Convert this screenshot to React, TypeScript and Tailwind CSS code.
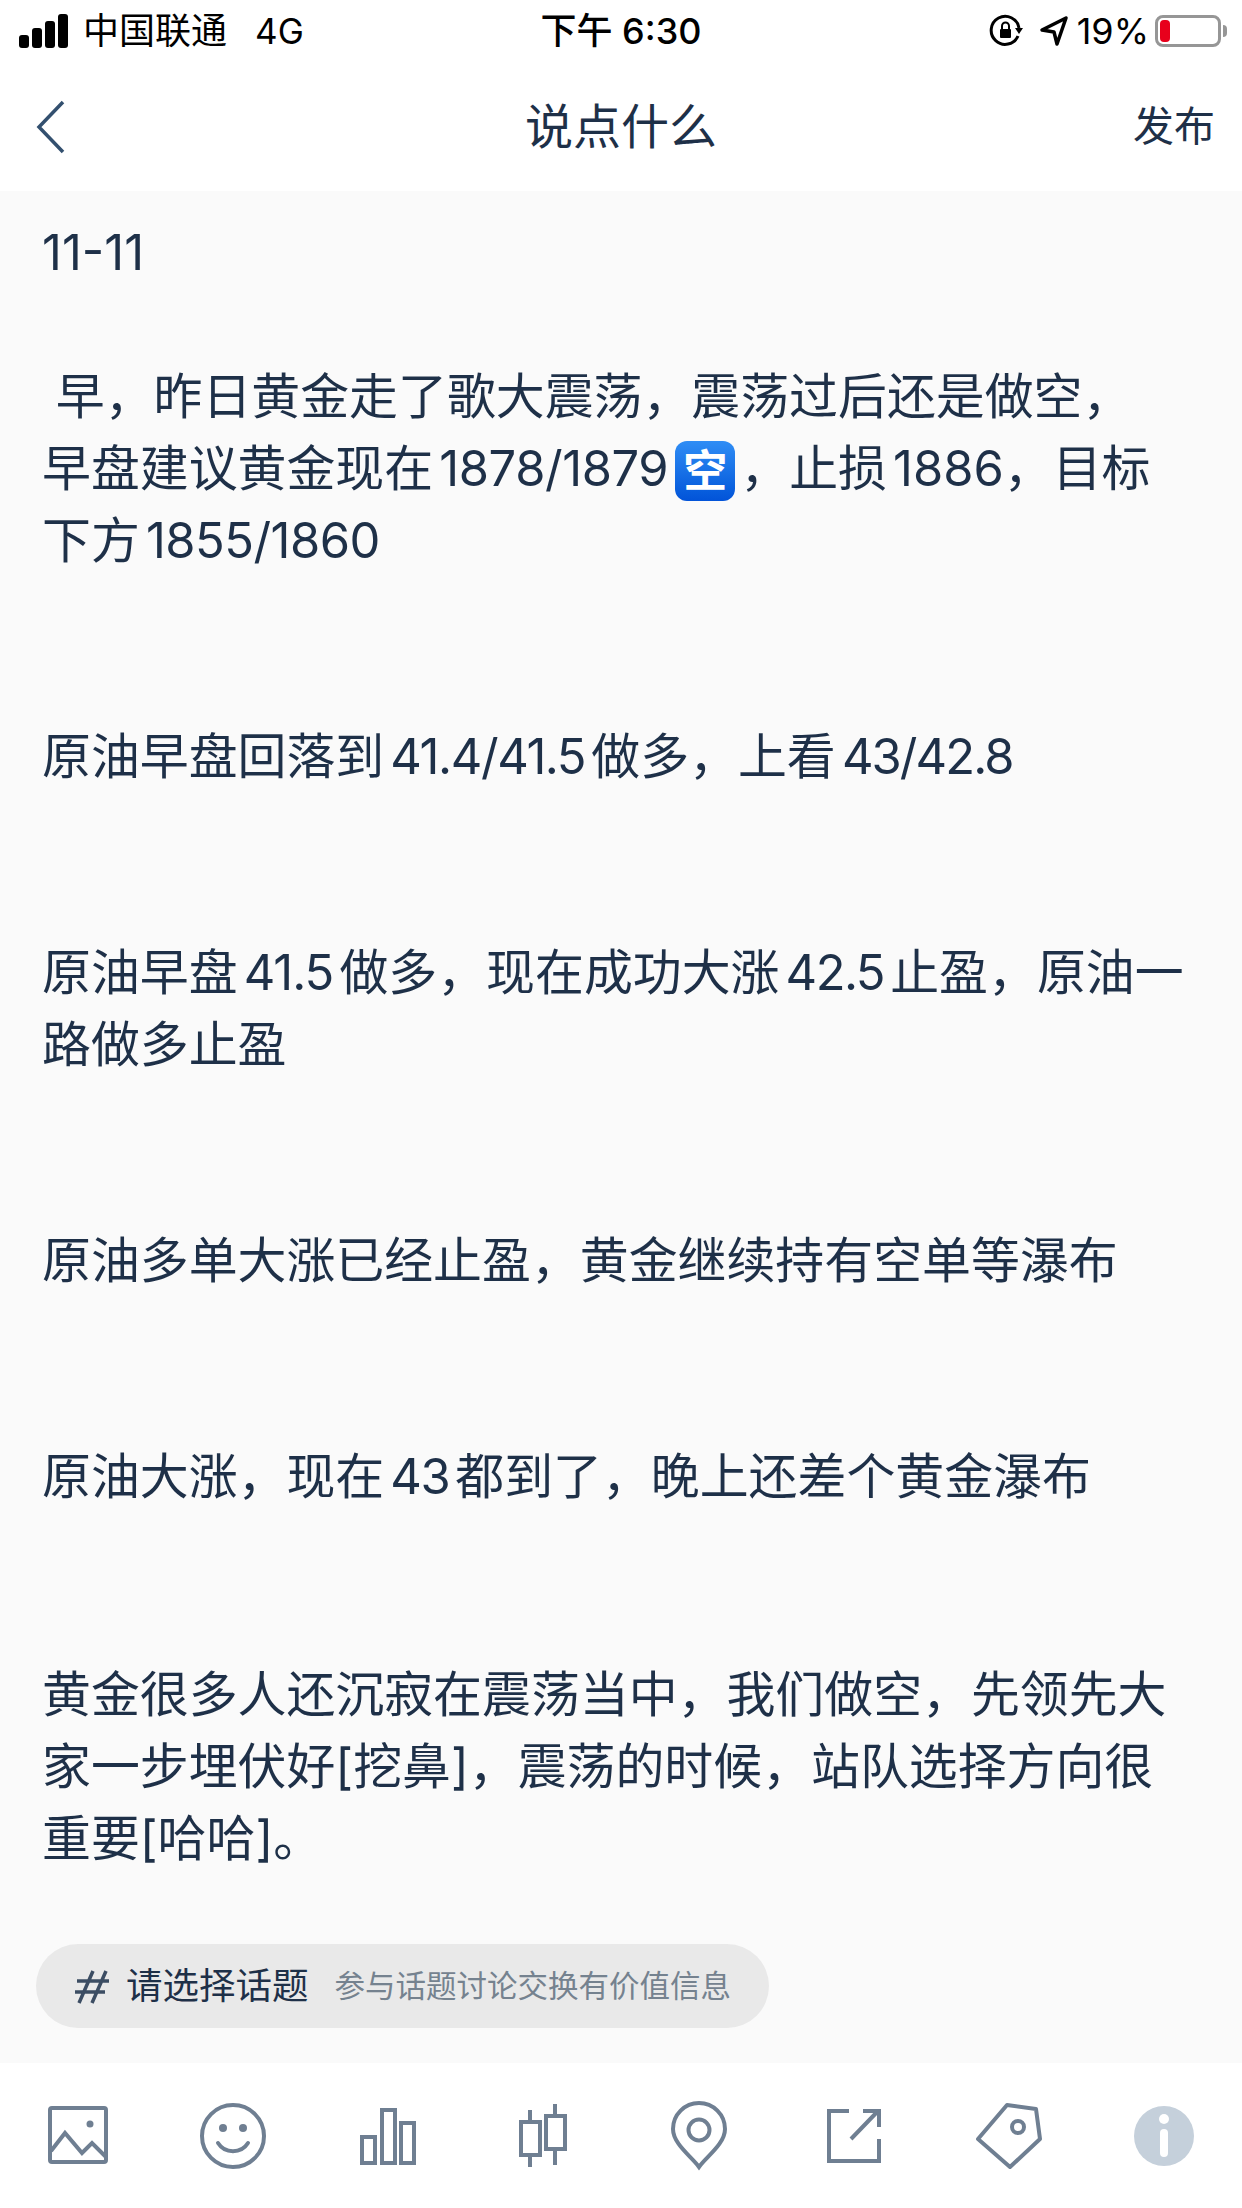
const iconStroke = "#6f7f92";

function Signal() {
  return (
    <div className="flex items-end gap-[3px]">
      <div className="h-[13px] w-[10px] rounded-[3px] bg-black" />
      <div className="h-[20px] w-[10px] rounded-[3px] bg-black" />
      <div className="h-[27px] w-[10px] rounded-[3px] bg-black" />
      <div className="h-[34px] w-[10px] rounded-[3px] bg-black" />
    </div>
  );
}

function RotationLock() {
  return (
    <svg width="34" height="34" viewBox="0 0 34 34" fill="none">
      <path d="M29 22a14 14 0 1 1 1-8" stroke="#000" strokeWidth="3" />
      <path d="M26 14h8l-4 6z" fill="#000" />
      <rect x="11" y="15" width="11" height="9" rx="1" fill="#000" />
      <path d="M13 15v-3a3.5 3.5 0 0 1 7 0v3" stroke="#000" strokeWidth="2" />
    </svg>
  );
}

function LocationArrow() {
  return (
    <svg width="30" height="32" viewBox="0 0 30 32" fill="none">
      <path d="M27 3 3 15l12 2 3 12z" stroke="#000" strokeWidth="3.5" strokeLinejoin="round" />
    </svg>
  );
}

function Battery() {
  return (
    <div className="flex items-center gap-[2px]">
      <div className="flex h-[32px] w-[66px] items-center rounded-[8px] border-[3px] border-[#969696] px-[2px]">
        <div className="h-[22px] w-[10px] rounded-[4px] bg-[#e8001c]" />
      </div>
      <div className="h-[12px] w-[4px] rounded-r-full bg-[#969696]" />
    </div>
  );
}

function ToolIcon({ children }: { children: React.ReactNode }) {
  return (
    <div className="flex items-center justify-center">
      <svg
        width="70"
        height="70"
        viewBox="0 0 70 70"
        fill="none"
        stroke={iconStroke}
        strokeWidth="4"
      >
        {children}
      </svg>
    </div>
  );
}

function Hash() {
  return (
    <svg width="36" height="36" viewBox="0 0 36 36" fill="none" stroke="#3c4d63" strokeWidth="3.5">
      <path d="M3 13h32M1 24h30M19 3 5 35M32 3 18 35" />
    </svg>
  );
}

export default function App() {
  return (
    <div className="flex h-[2208px] w-[1242px] flex-col bg-white font-['Inter','Noto_Sans_CJK_SC',sans-serif] text-[#1e3048]">
      <div className="relative flex h-[62px] items-center justify-between pl-[19px] pr-[15px] text-[36px] text-black">
        <div className="flex items-center">
          <Signal />
          <span className="ml-[15px]">中国联通</span>
          <span className="ml-[28px] text-[35px]">4G</span>
        </div>
        <div className="absolute left-0 right-0 text-center font-medium">下午 6:30</div>
        <div className="flex items-center">
          <RotationLock />
          <div className="ml-[16px]"><LocationArrow /></div>
          <span className="ml-[8px]">19%</span>
          <div className="ml-[6px]"><Battery /></div>
        </div>
      </div>

      <div className="grid h-[129px] grid-cols-[1fr_auto_1fr] items-center px-[27px]">
        <svg className="ml-[9px]" width="30" height="54" viewBox="0 0 30 54" fill="none" stroke="#33506f" strokeWidth="3.5">
          <path d="M27 2 3 27l24 25" />
        </svg>
        <div className="text-[48px]">说点什么</div>
        <div className="justify-self-end text-[41px]">发布</div>
      </div>

      <div className="flex flex-1 flex-col bg-[#fafafa] px-[42px] pb-[35px] pt-[26px]">
        <div className="whitespace-pre text-[48.9px] leading-[72px] [text-autospace:normal]">
          <p>11-11</p>
          <p className="mt-[72px]">{" 早，昨日黄金走了歌大震荡，震荡过后还是做空，"}</p>
          <p className="h-[72px]">
            早盘建议黄金现在<span className="tracking-[-0.4px]">1878/1879</span>
            <span className="ml-[7px] mr-[5px] inline-flex h-[60px] w-[60px] items-center justify-center rounded-[12px] bg-gradient-to-b from-[#2f8df5] to-[#0253d8] align-[-1px] text-[44px] font-bold leading-none text-white">
              空
            </span>
            ，止损1886，目标
          </p>
          <p>下方<span className="tracking-[-0.5px]">1855/1860</span></p>
          <p className="mt-[144px]">
            原油早盘回落到<span className="tracking-[-1.4px]">41.4/41.5</span>做多，上看<span className="tracking-[-1.9px]">43/42.8</span>
          </p>
          <p className="mt-[144px]">
            原油早盘<span className="tracking-[-1px]">41.5</span>做多，现在成功大涨<span className="tracking-[-1.5px]">42.5</span>止盈，原油一
          </p>
          <p>路做多止盈</p>
          <p className="mt-[144px]">原油多单大涨已经止盈，黄金继续持有空单等瀑布</p>
          <p className="mt-[144px]">原油大涨，现在<span className="tracking-[-1.5px]">43</span>都到了，晚上还差个黄金瀑布</p>
          <p className="mt-[146px]">黄金很多人还沉寂在震荡当中，我们做空，先领先大</p>
          <p>家一步埋伏好[挖鼻]，震荡的时候，站队选择方向很</p>
          <p>重要[哈哈]。</p>
        </div>

        <div className="mt-auto -ml-[6px] flex h-[84px] w-[733px] items-center rounded-full bg-[#e9e9e9] pl-[38px]">
          <Hash />
          <span className="ml-[16px] text-[36.5px]">请选择话题</span>
          <span className="ml-[26px] text-[30.5px] text-[#75828f]">参与话题讨论交换有价值信息</span>
        </div>
      </div>

      <div className="grid h-[145px] grid-cols-8 items-center">
        <ToolIcon>
          <rect x="7" y="7" width="56" height="54" rx="2" />
          <path d="M8 50 22 32l17 20 10-10 14 14" />
          <circle cx="47" cy="23" r="3.5" fill={iconStroke} stroke="none" />
        </ToolIcon>
        <ToolIcon>
          <circle cx="35" cy="35" r="31" />
          <circle cx="25" cy="27" r="4" fill={iconStroke} stroke="none" />
          <circle cx="45" cy="27" r="4" fill={iconStroke} stroke="none" />
          <path d="M20 42c7 11 23 11 30 0" strokeLinecap="round" />
        </ToolIcon>
        <ToolIcon>
          <rect x="9" y="36" width="13" height="26" />
          <rect x="29" y="9" width="13" height="53" />
          <rect x="48" y="22" width="13" height="40" />
        </ToolIcon>
        <ToolIcon>
          <rect x="13" y="21" width="19" height="33" />
          <rect x="38" y="15" width="19" height="33" />
          <path d="M22 9v12M22 54v12M47 3v12M47 48v16" />
        </ToolIcon>
        <ToolIcon>
          <path d="M35 66C28 56 9 43 9 28a26 26 0 0 1 52 0c0 15-19 28-26 38z" />
          <circle cx="35" cy="29" r="10.5" />
        </ToolIcon>
        <ToolIcon>
          <path d="M30 10H10v50h50V38" />
          <path d="M32 38 59 10M44 10h16v16" />
        </ToolIcon>
        <ToolIcon>
          <path d="M33 4l29 4 4 30-30 28L4 38z" strokeLinejoin="round" />
          <circle cx="44" cy="26" r="6" />
        </ToolIcon>
        <div className="flex items-center justify-center">
          <svg width="62" height="62" viewBox="0 0 62 62">
            <circle cx="31" cy="31" r="30" fill="#c5d0db" />
            <circle cx="31" cy="14" r="5" fill="#fff" />
            <rect x="27" y="24" width="8" height="28" rx="4" fill="#fff" />
          </svg>
        </div>
      </div>
    </div>
  );
}
